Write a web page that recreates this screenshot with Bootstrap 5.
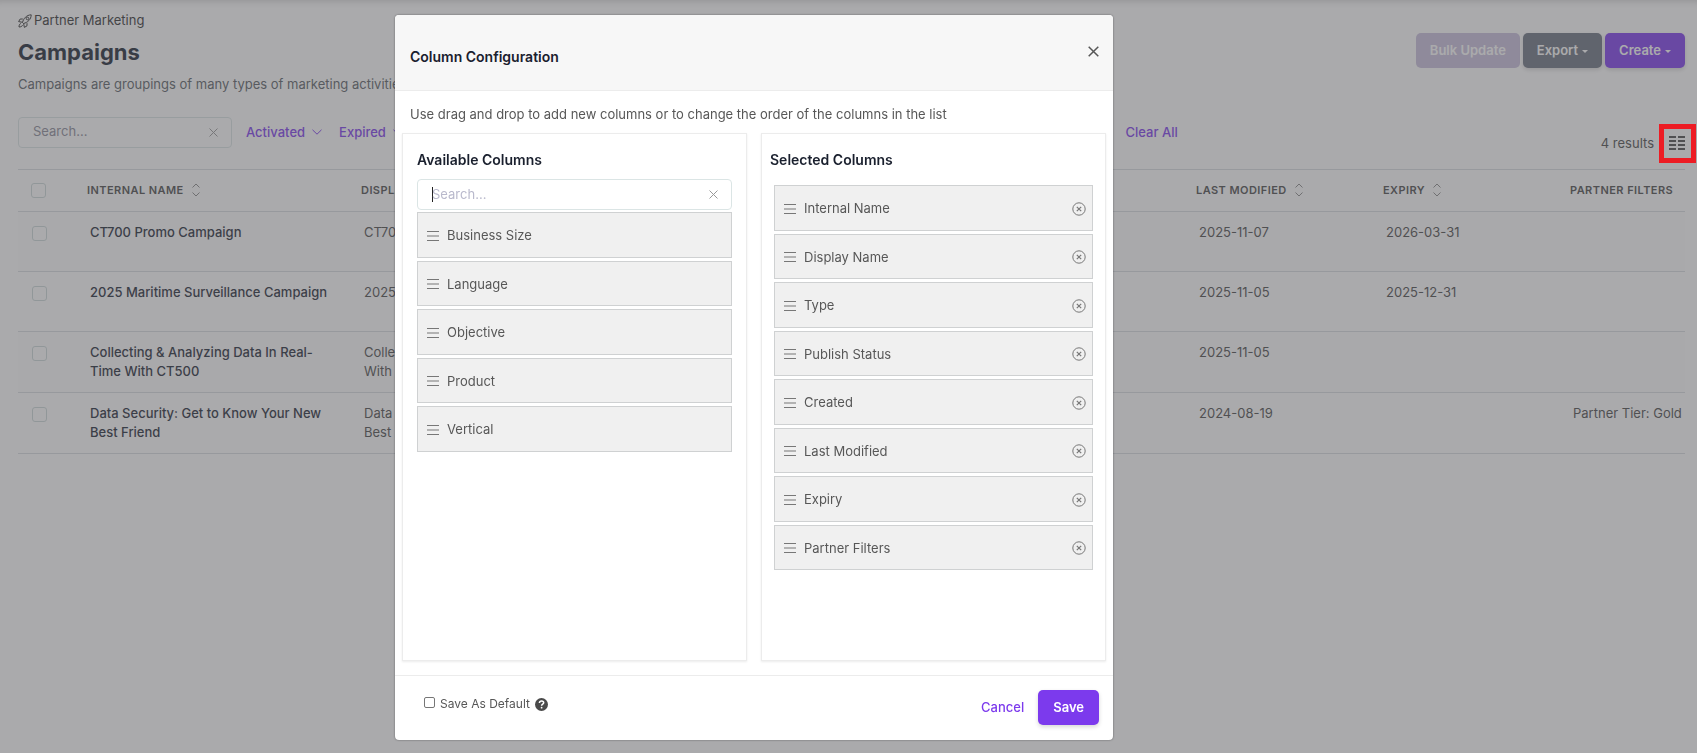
<!DOCTYPE html>
<html lang="en">
<head>
<meta charset="utf-8">
<meta name="viewport" content="width=device-width, initial-scale=1">
<title>Campaigns</title>
<link rel="stylesheet" href="https://cdn.jsdelivr.net/npm/bootstrap@5.3.0/dist/css/bootstrap.min.css">
<style>
  body { font-family: Inter, "Liberation Sans", sans-serif; font-size: 13px; color: #4b4b4b; line-height: 1.5; background: #fff; min-height: 100vh; }
  svg { display: block; flex: none; fill: none; stroke: currentColor; }
  .page { padding: 11px 12px 0 18px; box-shadow: inset 0 8px 8px -8px rgba(0, 0, 0, .25); }
  .page-title { font-size: 22px; font-weight: 700; line-height: 32px; color: #1a2432; margin: 5px 0 6px; }
  .crumb { gap: 2px; color: #333; }
  .intro { color: #5a5f66; line-height: 20px; }
  .violet { color: #7c3aed; font-weight: 500; text-decoration: none; }
  .btn { --bs-btn-font-size: 13px; --bs-btn-font-weight: 600; --bs-btn-border-radius: 5px; --bs-btn-border-width: 0; --bs-btn-line-height: 20px; --bs-btn-padding-x: 15px; padding-top: 7px; padding-bottom: 8px; }
  .btn-brand, .btn-slate { box-shadow: 0 2px 4px rgba(0, 0, 0, .16); }
  .btn-brand { --bs-btn-color: #fff; --bs-btn-bg: #7c3aed; --bs-btn-hover-color: #fff; --bs-btn-hover-bg: #6d28d9; --bs-btn-disabled-color: #fff; --bs-btn-disabled-bg: #c8bfdc; --bs-btn-disabled-opacity: 1; }
  .btn-brand:disabled { box-shadow: none; }
  .btn-slate { --bs-btn-color: #fff; --bs-btn-bg: #6b7280; --bs-btn-hover-color: #fff; --bs-btn-hover-bg: #565d6a; }
  .btn.dropdown-toggle::after { margin-left: 4px; vertical-align: 2px; border-width: 3px 3px 0; }
  .actions { gap: 3px; padding-top: 22px; }
  .actions .btn { --bs-btn-padding-x: 14px; }
  .toolbar { margin-top: 23px; }
  .find { border: 1px solid #dbe5e5; border-radius: 4px; height: 31px; padding: 0 13px 0 14px; background: #fff; }
  .find input { border: 0; outline: 0; padding: 0; background: none; color: #4b4b4b; min-width: 0; caret-color: transparent; }
  .find input::placeholder { color: #b9b9cc; opacity: 1; }
  .find .bare { color: #999; }
  .find.is-focused::before { content: ""; width: 1px; height: 15px; margin-right: -1px; background: #222; }
  .page .find { width: 214px; }
  .page .find input::placeholder { color: #8b8b98; }
  .bare { border: 0; background: none; padding: 0; color: inherit; }
  .filters { width: 53.6%; gap: 17px; padding-left: 14px; }
  .filters a { display: flex; align-items: center; gap: 7px; }
  .toolbar > .violet, .filters { line-height: 20px; padding-top: 5px; }
  .results { margin: 17px -1px 0 0; gap: 14px; }
  .callout-box { position: absolute; inset: -11px -10px -12px -9px; border: 5px solid #ed1c24; z-index: 1060; pointer-events: none; }
  .campaigns { table-layout: fixed; margin: 16px 0 0; border-top: 1px solid #d9dde0; --bs-table-striped-bg: #fcfcfc; color: inherit; --bs-table-color: #4b4b4b; --bs-table-striped-color: #4b4b4b; }
  .campaigns > :not(caption) > * > * { padding: 11px 0 11px 11px; border-color: #d9dde0; vertical-align: top; }
  .campaigns > thead > tr > th { padding: 12px 8px 13px; font-size: 11px; font-weight: 600; letter-spacing: .04em; line-height: 16px; text-transform: uppercase; white-space: nowrap; }
  .campaigns td { line-height: 19px; height: 60px; white-space: nowrap; }
  .campaigns td a { font-weight: 500; color: #1f2937; text-decoration: none; }
  .campaigns > :not(caption) > * > .pick { padding-left: 14px; }
  .campaigns > thead > tr > .pick { padding-left: 13px; }
  .pick .form-check-input { width: 15px; height: 15px; margin: 3px 0 0; display: block; border-color: #ccd8d8; border-radius: 3px; }
  .pick.all .form-check-input { margin-top: 1px; }
  .c-pick { width: 61px; } .c-wide { width: 274px; } .c-date { width: 187px; }
  .sort { gap: 8px; }
  .sort svg { color: #888; }
  .modal-backdrop { --bs-backdrop-bg: #555559; --bs-backdrop-opacity: .5; }
  .modal { padding-right: 189px; overflow-x: hidden; }
  .modal-dialog { max-width: 718px; margin: 15px auto; }
  .modal-content { border: 0; border-radius: 4px; box-shadow: 0 0 2px rgba(0, 0, 0, .5); color: #575757; }
  .modal-header { background: #f7f7f7; border-bottom: 1px solid #ececec; border-radius: 4px 4px 0 0; padding: 0 14px 2px 15px; height: 76px; }
  .modal-title, .panel h3 { font-size: 14px; font-weight: 600; line-height: 20px; color: #1a202e; margin: 0; }
  .modal-title { padding-top: 10px; }
  .modal-body { padding: 13px 7px 14px; }
  .modal-body > p { padding-left: 8px; line-height: 20px; margin-bottom: 9px; }
  .panels { display: grid; grid-template-columns: 1fr 1fr; gap: 14px; }
  .panel { border: 1px solid #ececec; box-shadow: 0 1px 2px rgba(0, 0, 0, .08); padding: 16px 14px; min-height: 528px; }
  .panel h3 { margin-bottom: 9px; }
  .panel.chosen { padding: 16px 12px 16px 8px; }
  .panel.chosen h3 { margin-bottom: 15px; }
  .panel.chosen ul { margin-left: 4px; }
  .tiles { list-style: none; padding: 0; margin: 2px 0 0; display: grid; gap: 3px; }
  .tiles li { display: flex; align-items: center; gap: 8px; padding: 13px 6px 11px 9px; background: #f0f0f0; border: 1px solid #cfd1d2; }
  .tiles svg { color: #777; }
  .modal-footer { border-top: 1px solid #ececec; padding: 14px 14px 15px; justify-content: space-between; align-items: flex-start; }
  .modal-footer > * { margin: 0; }
  .modal-footer .violet { margin-right: 14px; }
  .save-default { font-size: 12px; line-height: 18px; gap: 5px; padding: 5px 0 0 15px; }
  .save-default input { width: 11px; height: 11px; margin: 0 0 3px; appearance: none; border: 1px solid #767676; border-radius: 2px; background: #fff; }
  .save-default input:checked { background: #7c3aed; }
</style>
</head>
<body>
<main class="page">
  <header class="d-flex justify-content-between align-items-start">
    <div>
      <div class="crumb d-flex align-items-center">
        <svg width="14" height="14" viewBox="0 0 14 14" stroke-width="1"><path d="M4.500 8.500C5.500 4.500 8.500 1 13.200.8C13.200 5.500 9.500 8.500 5.500 9.500ZM4.800 5H2.200L.600 7.600L4.500 8.300M9 9.200v2.600L6.400 13.400L5.600 9.500M2.800 9.500C1.400 10 1.100 11.200 1 13C2.800 12.900 4 12.600 4.500 11.200"/><circle cx="9.500" cy="4.500" r="1.300"/></svg>
        <span>Partner Marketing</span>
      </div>
      <h1 class="page-title">Campaigns</h1>
      <p class="intro mb-0">Campaigns are groupings of many types of marketing activities</p>
    </div>
    <div class="actions d-flex">
      <button type="button" class="btn btn-brand" disabled>Bulk Update</button>
      <button type="button" class="btn btn-slate dropdown-toggle">Export</button>
      <button type="button" class="btn btn-brand dropdown-toggle">Create</button>
    </div>
  </header>

  <div class="toolbar d-flex align-items-start">
    <div class="find d-flex align-items-center">
      <input class="flex-fill" type="text" placeholder="Search..." aria-label="Search campaigns">
      <button type="button" class="bare" aria-label="Clear search"><svg width="9" height="9" viewBox="0 0 9 9"><path d="M.500.500l8 8M8.500.500l-8 8"/></svg></button>
    </div>
    <div class="filters d-flex flex-shrink-0">
      <a class="violet" href="#">Activated <svg width="10" height="6" viewBox="0 0 10 6"><path d="M.500.800L5 5.200L9.500.800"/></svg></a>
      <a class="violet" href="#">Expired <svg width="10" height="6" viewBox="0 0 10 6"><path d="M.500.800L5 5.200L9.500.800"/></svg></a>
    </div>
    <a class="violet" href="#">Clear All</a>
    <div class="results d-flex align-items-center ms-auto">
      <span>4 results</span>
      <button type="button" class="bare position-relative" aria-label="Configure columns">
        <svg width="18" height="16" viewBox="0 0 18 16" stroke-width="2"><path d="M1 2h7M10 2h7M1 6h7M10 6h7M1 10h7M10 10h7M1 14h7M10 14h7"/></svg>
        <span class="callout-box"></span>
      </button>
    </div>
  </div>

  <table class="campaigns table table-striped">
    <colgroup><col class="c-pick"><col class="c-wide"><col class="c-wide"><col class="c-date"><col class="c-date"><col class="c-date"><col class="c-date"><col class="c-date"><col></colgroup>
    <thead>
      <tr>
        <th class="pick all"><input class="form-check-input" type="checkbox" aria-label="Select all"></th>
        <th><span class="sort d-flex align-items-center">Internal Name <svg width="8" height="14" viewBox="0 0 8 14"><path d="M.500 4.500L4 1L7.500 4.500M.500 9.500L4 13L7.500 9.500"/></svg></span></th>
        <th>Display Name</th><th>Type</th><th>Publish Status</th><th>Created</th>
        <th><span class="sort d-flex align-items-center">Last Modified <svg width="8" height="14" viewBox="0 0 8 14"><path d="M.500 4.500L4 1L7.500 4.500M.500 9.500L4 13L7.500 9.500"/></svg></span></th>
        <th><span class="sort d-flex align-items-center">Expiry <svg width="8" height="14" viewBox="0 0 8 14"><path d="M.500 4.500L4 1L7.500 4.500M.500 9.500L4 13L7.500 9.500"/></svg></span></th>
        <th>Partner Filters</th>
      </tr>
    </thead>
    <tbody>
      <tr>
        <td class="pick"><input class="form-check-input" type="checkbox" aria-label="Select CT700 Promo Campaign"></td>
        <td><a href="#">CT700 Promo Campaign</a></td><td>CT700</td><td></td><td></td><td></td><td>2025-11-07</td><td>2026-03-31</td><td></td>
      </tr>
      <tr>
        <td class="pick"><input class="form-check-input" type="checkbox" aria-label="Select 2025 Maritime Surveillance Campaign"></td>
        <td><a href="#">2025 Maritime Surveillance Campaign</a></td><td>2025</td><td></td><td></td><td></td><td>2025-11-05</td><td>2025-12-31</td><td></td>
      </tr>
      <tr>
        <td class="pick"><input class="form-check-input" type="checkbox" aria-label="Select Collecting &amp; Analyzing Data In Real-Time With CT500"></td>
        <td><a href="#">Collecting &amp; Analyzing Data In Real-<br>Time With CT500</a></td><td>Collecting<br>With CT500</td><td></td><td></td><td></td><td>2025-11-05</td><td></td><td></td>
      </tr>
      <tr>
        <td class="pick"><input class="form-check-input" type="checkbox" aria-label="Select Data Security: Get to Know Your New Best Friend"></td>
        <td><a href="#">Data Security: Get to Know Your New<br>Best Friend</a></td><td>Data<br>Best Friend</td><td></td><td></td><td></td><td>2024-08-19</td><td></td><td>Partner Tier: Gold</td>
      </tr>
    </tbody>
  </table>
</main>

<div class="modal-backdrop show"></div>
<div class="modal d-block" role="dialog" aria-modal="true" aria-labelledby="config-title">
  <div class="modal-dialog">
    <div class="modal-content">
      <div class="modal-header">
        <h2 class="modal-title" id="config-title">Column Configuration</h2>
        <button type="button" class="bare" aria-label="Close"><svg width="11" height="11" viewBox="0 0 11 11" stroke-width="1.500"><path d="M.700.700l9.600 9.600M10.300.700L.700 10.300"/></svg></button>
      </div>
      <div class="modal-body">
        <p>Use drag and drop to add new columns or to change the order of the columns in the list</p>
        <div class="panels">
          <section class="panel">
            <h3>Available Columns</h3>
            <div class="find is-focused d-flex align-items-center">
              <input class="flex-fill" type="text" placeholder="Search..." aria-label="Search available columns" autofocus>
              <button type="button" class="bare" aria-label="Clear search"><svg width="9" height="9" viewBox="0 0 9 9"><path d="M.500.500l8 8M8.500.500l-8 8"/></svg></button>
            </div>
            <ul class="tiles" id="available"></ul>
          </section>
          <section class="panel chosen">
            <h3>Selected Columns</h3>
            <ul class="tiles" id="selected"></ul>
          </section>
        </div>
      </div>
      <div class="modal-footer">
        <div class="save-default d-flex align-items-center">
          <input type="checkbox" id="save-default">
          <label for="save-default">Save As Default</label>
          <svg width="13" height="13" viewBox="0 0 13 13" stroke="none"><circle cx="6.500" cy="6.500" r="6.500" fill="#4a4a4a" stroke="none"/><path d="M4.400 5C4.500 3.700 5.400 3 6.600 3C7.800 3 8.700 3.700 8.700 4.800C8.700 6.200 6.600 6.200 6.600 7.700" fill="none" stroke="#fff" stroke-width="1.500"/><circle cx="6.600" cy="9.700" r=".900" fill="#fff" stroke="none"/></svg>
        </div>
        <div class="d-flex align-items-center">
          <a class="violet" href="#">Cancel</a>
          <button type="button" class="btn btn-brand">Save</button>
        </div>
      </div>
    </div>
  </div>
</div>

<script src="https://cdn.jsdelivr.net/npm/bootstrap@5.3.0/dist/js/bootstrap.bundle.min.js"></script>
<script>
  const grip = '<svg width="12" height="10" viewBox="0 0 12 10"><path d="M0 .5h12M0 5h12M0 9.500h12"/></svg>';
  const remove = name => `<button type="button" class="bare ms-auto" aria-label="Remove ${name}"><svg width="14" height="14" viewBox="0 0 14 14"><circle cx="7" cy="7" r="6.200"/><path d="M4.800 4.800l4.400 4.400M9.200 4.800l-4.400 4.400" stroke-width="1.200"/></svg></button>`;
  const fill = (id, names, removable) => {
    document.getElementById(id).innerHTML = names
      .map(name => `<li>${grip}<span>${name}</span>${removable ? remove(name) : ''}</li>`).join('');
  };
  fill('available', ['Business Size', 'Language', 'Objective', 'Product', 'Vertical'], false);
  fill('selected', ['Internal Name', 'Display Name', 'Type', 'Publish Status', 'Created', 'Last Modified', 'Expiry', 'Partner Filters'], true);
</script>
</body>
</html>
